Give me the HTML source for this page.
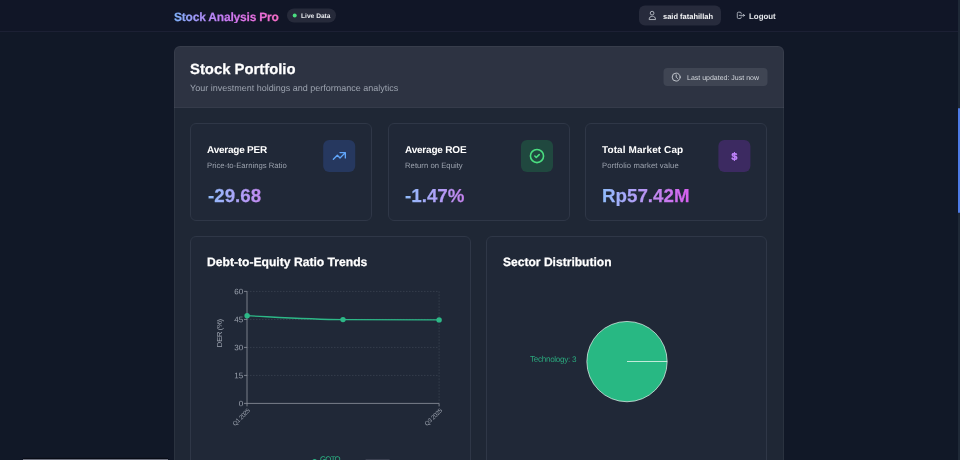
<!DOCTYPE html>
<html lang="en">
<head>
<meta charset="utf-8">
<title>Stock Analysis Pro</title>
<style>
*{box-sizing:border-box;margin:0;padding:0}
html,body{width:960px;height:460px;overflow:hidden;background:#111827}
body{position:relative;font-family:"Liberation Sans",sans-serif;color:#fff}
.t{position:absolute;white-space:nowrap;line-height:1;transform:rotate(.03deg);transform-origin:0 100%}
#app{position:absolute;left:0;top:0;width:960px;height:460px;will-change:transform}
.t{font-weight:400}
.b{font-weight:700}
.hv{-webkit-text-stroke:.25px}
.grad{background-repeat:no-repeat;-webkit-background-clip:text;background-clip:text;color:transparent}
.logo{background-image:linear-gradient(90deg,#7fb2fb 0%,#b08cf8 30%,#c97af3 50%,#e46fe0 75%,#f56cc4 100%)}
.val{width:148px;background-image:linear-gradient(90deg,#90bcfb 0%,#aaa6f9 18%,#c189ef 36%,#d660f0 58%,#ec4899 100%)}
header{position:absolute;left:0;top:0;width:960px;height:32px;background:#111627;border-bottom:1px solid #1c2034}
.badge{position:absolute;border-radius:7px;background:#262a3a}
.dot{position:absolute;border-radius:50%;background:#4ade80}
.user{position:absolute;border-radius:6px;background:#272b3c}
main{position:absolute;border-radius:6px;background:#1f2735;overflow:hidden}
.edge{position:absolute;left:0;top:0;width:100%;height:100%;border:1px solid rgba(255,255,255,.05);border-radius:6px;pointer-events:none}
.mh{position:absolute;left:0;top:0;width:100%;background:#2d3342;border-bottom:1px solid #353b4a}
.upd{position:absolute;border-radius:4px;background:#3f4553}
.card{position:absolute;border:1px solid #2f3747;border-radius:6px;background:#202837}
.ibox{position:absolute;border-radius:6px}
.scroll{position:absolute;left:958px;top:0;width:2px;height:460px;background:#1f2937}
.thumb{position:absolute;left:0;top:108px;width:2px;height:105px;background:#4f7ce8;border-radius:1px}
.toast{position:absolute;left:23px;top:459px;width:145px;height:4px;background:#6f7280;box-shadow:0 -1px 1px rgba(0,0,8,.55)}
</style>
</head>
<body>
<div id="app">
<header>
<h1 class="t b hv grad logo" id="logo" style="left:173.90px;top:10.64px;font-size:12px;letter-spacing:-0.2px">Stock Analysis Pro</h1>
<div class="badge" style="left:287px;top:8px;width:49px;height:14px;transform:translate(0.00px,0.50px)"></div>
<div class="dot" style="left:292px;top:13px;width:4px;height:4px;transform:translate(0.70px,0.60px)"></div>
<span class="t b" id="live" style="left:300.50px;top:12.92px;font-size:6.65px;color:#e5e7eb">Live Data</span>
<div class="user" style="left:639px;top:5px;width:82px;height:20px;transform:translate(0.00px,0.50px)"></div>
<svg style="position:absolute;left:644px;top:8px;width:16px;height:16px" viewBox="644 8 16 16" fill="none" stroke="#c3c7d0" stroke-width="0.85" stroke-linejoin="round"><circle cx="652.1" cy="13.15" r="1.85"/><path d="M649.15 19.55C649.15 17.3 650.5 16.25 652.35 16.25S655.55 17.3 655.55 19.55Z"/></svg>
<span class="t b" id="uname" style="left:663.00px;top:12.55px;font-size:7.5px;color:#f3f4f6">said fatahillah</span>
<svg style="position:absolute;left:736px;top:10px;width:9.5px;height:9.5px;transform:translate(0.10px,0.60px)" viewBox="0 0 24 24" fill="none" stroke="#c9cdd6" stroke-width="2" stroke-linecap="round" stroke-linejoin="round"><path d="M18.2 14.8l2.8-2.8m0 0l-2.8-2.8m2.8 2.800H8m5 4v1a3 3 0 01-3 3H6a3 3 0 01-3-3V7a3 3 0 013-3h4a3 3 0 013 3v1"/></svg>
<span class="t b" id="logout" style="left:748.80px;top:12.91px;font-size:7.9px;color:#e5e7eb">Logout</span>
</header>
<main style="left:174px;top:46px;width:610px;height:440px">
<div class="mh" style="height:62px">
<h2 class="t b hv" id="h1" style="left:16.40px;top:16.13px;font-size:14.85px">Stock Portfolio</h2>
<p class="t" id="sub" style="left:16.40px;top:38.33px;font-size:9px;color:#9ca3af">Your investment holdings and performance analytics</p>
<div class="upd" style="left:489px;top:22px;width:104px;height:18px;transform:translate(0.50px,0.00px)"></div>
<svg style="position:absolute;left:494px;top:23px;width:16px;height:16px" viewBox="668 69 16 16" fill="none" stroke="#c6cad2" stroke-width="0.95" stroke-linecap="round" stroke-linejoin="round"><circle cx="676.2" cy="77.1" r="4"/><path d="M676.2 74.9V77.1L677.6 78.5"/></svg>
<span class="t" id="updt" style="left:513.40px;top:27.87px;font-size:7px;color:#d1d5db">Last updated: Just now</span>
</div>
<section class="card" style="left:16.00px;top:77.00px;width:182.00px;height:98.00px">
<h3 class="t b" id="s1t" style="left:16.20px;top:20.53px;font-size:10px;letter-spacing:-0.22px">Average PER</h3>
<p class="t" id="s1s" style="left:16.20px;top:37.78px;font-size:7.7px;letter-spacing:0.01px;color:#9ca3af">Price-to-Earnings Ratio</p>
<div class="ibox" style="left:132px;top:15px;width:32px;height:32px;transform:translate(0.20px,0.90px);background:#26385f"><svg style="position:absolute;left:8px;top:8px;width:16px;height:16px;transform:translate(0.15px,0.05px)" viewBox="0 0 24 24" fill="none" stroke="#60a5fa" stroke-width="2" stroke-linecap="round" stroke-linejoin="round"><path d="M13 7h8m0 0v8m0-8l-8 8-4-4-6 6"/></svg></div>
<p class="t b hv grad val" id="s1v" style="left:16.50px;top:62.53px;font-size:18.75px">-29.68</p>
</section>
<section class="card" style="left:214.00px;top:77.00px;width:182.00px;height:98.00px">
<h3 class="t b" id="s2t" style="left:15.80px;top:20.53px;font-size:10px;letter-spacing:-0.2px">Average ROE</h3>
<p class="t" id="s2s" style="left:15.80px;top:37.78px;font-size:7.7px;letter-spacing:0.03px;color:#9ca3af">Return on Equity</p>
<div class="ibox" style="left:132px;top:15px;width:32px;height:32px;transform:translate(0.00px,0.90px);background:#20483f"><svg style="position:absolute;left:7px;top:7px;width:17.5px;height:17.5px;transform:translate(0.25px,0.40px)" viewBox="0 0 24 24" fill="none" stroke="#4ade80" stroke-width="2.2" stroke-linecap="round" stroke-linejoin="round"><path d="M9 12l2 2 4-4m6 2a9 9 0 11-18 0 9 9 0 0118 0z"/></svg></div>
<p class="t b hv grad val" id="s2v" style="left:16.30px;top:62.53px;font-size:18.75px">-1.47%</p>
</section>
<section class="card" style="left:411.00px;top:77.00px;width:182.00px;height:98.00px">
<h3 class="t b" id="s3t" style="left:16.20px;top:20.53px;font-size:10px;letter-spacing:0.09px">Total Market Cap</h3>
<p class="t" id="s3s" style="left:16.20px;top:37.78px;font-size:7.7px;letter-spacing:0.11px;color:#9ca3af">Portfolio market value</p>
<div class="ibox" style="left:132px;top:15px;width:32px;height:32px;transform:translate(0.40px,0.90px);background:#3c2a61"><span class="t b" id="dollar" style="left:13.20px;top:11.80px;font-size:10.4px;color:#c084fc;-webkit-text-stroke:.45px #c084fc">$</span></div>
<p class="t b hv grad val" id="s3v" style="left:16.40px;top:62.53px;font-size:18.75px">Rp57.42M</p>
</section>
<section class="card" style="left:16.00px;top:190.00px;width:281.00px;height:260px">
<h3 class="t b hv" id="c1t" style="left:15.80px;top:19.23px;font-size:12.13px">Debt-to-Equity Ratio Trends</h3>
<svg style="position:absolute;left:-1px;top:-1px;overflow:visible" width="281.00" height="260" viewBox="190.00 236 281.00 260" font-family="Liberation Sans, sans-serif">
<g stroke="#3d4656" stroke-width="0.7" stroke-dasharray="1.5 1.5" fill="none">
<path d="M247 291.4H439.1M247 319.4H439.1M247 347.4H439.1M247 375.4H439.1"/>
<path d="M439.1 291.4V403.4"/>
</g>
<g stroke="#8a8f99" stroke-width="0.85" fill="none">
<path d="M247 291.4V403.4M247 403.4H439.1"/>
<path d="M244 291.4H247M244 319.4H247M244 347.4H247M244 375.4H247M244 403.4H247"/>
<path d="M247 403.4V406.4M439.1 403.4V406.4"/>
</g>
<g fill="#9ca3af" font-size="8" text-anchor="end">
<text id="y60" x="243.2" y="294.3" transform="rotate(.03 243 294.3)">60</text>
<text x="243.2" y="322.3" transform="rotate(.03 243 322.3)">45</text>
<text x="243.2" y="350.3" transform="rotate(.03 243 350.3)">30</text>
<text x="243.2" y="378.3" transform="rotate(.03 243 378.3)">15</text>
<text x="243.2" y="406.3" transform="rotate(.03 243 406.3)">0</text>
</g>
<text id="der" fill="#9ca3af" font-size="8" letter-spacing="-0.5" transform="translate(222.4 347.4) rotate(-90)">DER (%)</text>
<g fill="#9ca3af" font-size="6.2" letter-spacing="-0.3" text-anchor="end">
<text id="q1" transform="translate(250.3 411) rotate(-45)">Q1 2025</text>
<text id="q3" transform="translate(442.4 411) rotate(-45)">Q3 2025</text>
</g>
<path d="M247.1 315.7C279 317.3 311 319.4 343 319.6C375 319.75 407 319.85 439.1 319.9" fill="none" stroke="#2db887" stroke-width="1.3"/>
<g fill="#2db887"><circle cx="247.1" cy="315.7" r="2.7"/><circle cx="343" cy="319.6" r="2.7"/><circle cx="439.1" cy="319.9" r="2.7"/></g>
<circle cx="314.6" cy="461.4" r="2.3" fill="#2db887"/>
<text id="goto" x="320" y="461.7" transform="rotate(.03 320 461)" font-size="7.8" letter-spacing="-0.75" fill="#2db887">GOTO</text>
<rect x="365.6" y="459" width="24" height="2" fill="#3a4050"/>
</svg>
</section>
<section class="card" style="left:312.00px;top:190.00px;width:281.00px;height:260px">
<h3 class="t b hv" id="c2t" style="left:16.30px;top:19.28px;font-size:12.07px">Sector Distribution</h3>
<svg style="position:absolute;left:-1px;top:-1px;overflow:visible" width="281.00" height="260" viewBox="486.00 236 281.00 260" font-family="Liberation Sans, sans-serif">
<circle cx="627" cy="361.6" r="40.15" fill="#28b883" stroke="#e8f7f0" stroke-width="0.7"/>
<path d="M627 361.5H667.2" stroke="#e8f7f0" stroke-width="0.8"/>
<text id="tech" x="576.2" y="361.9" font-size="8.2" letter-spacing="-0.33" text-anchor="end" fill="#2aa67c" transform="rotate(.03 576 362)">Technology: 3</text>
</svg>
</section>
<div class="edge"></div>
</main>
<div class="toast"></div>
<div class="scroll"><div class="thumb"></div></div>
</div>
</body>
</html>
